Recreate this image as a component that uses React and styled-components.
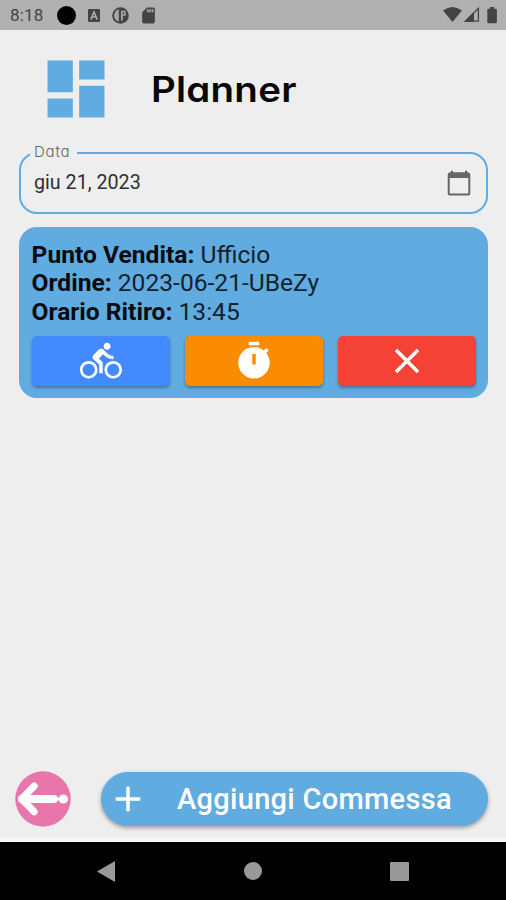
import React from 'react'
import styled, { createGlobalStyle } from 'styled-components'
import { MdDirectionsBike, MdClose, MdAdd, MdDashboard, MdSdCard } from 'react-icons/md'

const order = [
  { label: 'Punto Vendita:', value: 'Ufficio' },
  { label: 'Ordine:', value: '2023-06-21-UBeZy' },
  { label: 'Orario Ritiro:', value: '13:45' },
]

const TimerIcon = () => (
  <svg width="42" height="42" viewBox="0 0 24 24" fill="currentColor">
    <path d="M15 1H9v2h6V1zm4.03 6.39 1.42-1.42c-.43-.51-.9-.99-1.41-1.41l-1.42 1.42A8.962 8.962 0 0 0 12 4a9 9 0 1 0 7.03 3.39zM13 14h-2V8h2v6z" />
  </svg>
)

const CalendarIcon = () => (
  <svg width="24" height="26" viewBox="0 0 24 26">
    <path d="M4 0.8h2v3H4zM18 0.8h2v3h-2z" fill="#555" />
    <rect x="1.7" y="3.6" width="20.6" height="21" rx="1.6" fill="none" stroke="#666" strokeWidth="2" />
    <path d="M1 4.5Q1 2.6 3 2.6h18q2 0 2 1.9V8H1z" fill="#666" />
  </svg>
)

const BackIcon = () => (
  <svg width="56" height="56" viewBox="0 0 56 56">
    <circle cx="28" cy="28" r="27.7" fill="#e976ab" />
    <g fill="none" stroke="#fff" strokeLinecap="round" strokeLinejoin="round">
      <path d="M19.2 15L6.6 28 19.2 40.8" strokeWidth="7" />
      <path d="M7 28H39" strokeWidth="8" />
    </g>
    <path d="M42 28H53" stroke="#fff" strokeWidth="2.6" />
    <circle cx="48.3" cy="28" r="4.6" fill="#fff" />
  </svg>
)

const LetterIcon = () => (
  <svg width="12" height="13" viewBox="0 0 12 13">
    <rect width="12" height="13" rx="1" fill="#444" />
    <path d="M2.8 10.5L6 3l3.2 7.5M4.2 8h3.6" fill="none" stroke="#b0b0b0" strokeWidth="1.5" />
  </svg>
)

const CircleIcon = () => (
  <svg width="17" height="17" viewBox="0 0 17 17">
    <circle cx="8.5" cy="8.5" r="8.3" fill="#444" />
    <path d="M6.8 2.2v12.6Q2.2 13 2.2 8.5T6.8 2.2z" fill="#a8a8a8" />
    <path d="M9 3.8h4.6v5H10.8v4.6H9z" fill="#a8a8a8" />
    <path d="M10.6 5.3h1.5v2h-1.5z" fill="#444" />
  </svg>
)

const SystemIcons = () => (
  <svg width="56" height="18" viewBox="0 0 56 18">
    <path d="M0 4.5Q9.5 -2.5 19 4.5L9.5 16z" fill="#444" />
    <path d="M22.4 15.2L35.4 2.4v12.8z" fill="none" stroke="#444" strokeWidth="1.3" />
    <path d="M21 16L31 6v10z" fill="#444" />
    <path d="M44.3 4q0-1.3 1.3-1.3h1.5V1h4v1.7h1.5q1.3 0 1.3 1.3V16q0 1.2-1.3 1.2h-7q-1.3 0-1.3-1.2z" fill="#444" />
  </svg>
)

export default function App() {
  return (
    <>
      <GlobalStyle />
      <Screen>
        <StatusBar>
          <Clock>8:18</Clock>
          <Dot />
          <LetterIcon />
          <CircleIcon />
          <MdSdCard size={19} />
          <System><SystemIcons /></System>
        </StatusBar>
        <Content>
          <Header>
            <MdDashboard size={76} color="#60abdf" />
            <Title>Planner</Title>
          </Header>
          <DateField>
            <FieldLabel>Data</FieldLabel>
            <DateValue>giu 21, 2023</DateValue>
            <CalendarIcon />
          </DateField>
          <Card>
            {order.map((row) => (
              <Row key={row.label}><b>{row.label}</b> {row.value}</Row>
            ))}
            <Actions>
              <ActionButton $color="#448aff"><MdDirectionsBike size={42} /></ActionButton>
              <ActionButton $color="#fb8c00"><TimerIcon /></ActionButton>
              <ActionButton $color="#f44336"><MdClose size={42} /></ActionButton>
            </Actions>
          </Card>
          <Footer>
            <BackButton><BackIcon /></BackButton>
            <AddButton>
              <MdAdd size={42} />
              <AddText>Aggiungi Commessa</AddText>
            </AddButton>
          </Footer>
        </Content>
        <NavBar>
          <svg width="18" height="21" viewBox="0 0 18 21"><path d="M0 10.5L18 0v21z" fill="#999" /></svg>
          <HomeButton />
          <RecentButton />
        </NavBar>
      </Screen>
    </>
  )
}

const GlobalStyle = createGlobalStyle`
* {
  box-sizing: border-box;
}
body {
  margin: 0;
  font-family: Roboto, sans-serif;
}
svg {
  display: block;
  flex-shrink: 0;
}
`

const Screen = styled.div`
  display: flex;
  flex-direction: column;
  width: 506px;
  height: 900px;
  overflow: hidden;
  background-color: #eeeeee;
`
const StatusBar = styled.div`
  display: flex;
  align-items: center;
  height: 30px;
  padding: 0 7px 0 10px;
  color: #444444;
  background-color: #b0b0b0;
`
const Clock = styled.div`
  width: 47px;
  font-size: 17px;
  letter-spacing: 0.2px;
  color: #444444;
  & ~ svg:nth-of-type(1) {
    margin-left: 12px;
  }
  & ~ svg:nth-of-type(2) {
    margin-left: 12px;
  }
  & ~ svg:nth-of-type(3) {
    margin-left: 10px;
  }
`
const Dot = styled.div`
  width: 19px;
  height: 19px;
  border-radius: 50%;
  background-color: #000000;
`
const System = styled.div`
  margin-left: auto;
`
const Content = styled.div`
  display: flex;
  flex-direction: column;
  flex: 1;
  padding: 20px 18px 16px 19px;
  border-bottom: 4px solid #f5f5f5;
`
const Header = styled.div`
  display: flex;
  align-items: center;
  height: 78px;
  padding-left: 19px;
`
const Title = styled.h1`
  margin: 0 0 1px 37px;
  font-family: Inter, sans-serif;
  font-size: 35px;
  font-weight: 600;
  font-feature-settings: 'cv11';
  letter-spacing: 0.2px;
  transform: scaleX(1.1);
  transform-origin: left;
  color: #080808;
`
const DateField = styled.div`
  position: relative;
  display: flex;
  align-items: center;
  justify-content: space-between;
  height: 62px;
  margin-top: 24px;
  padding: 0 15px 0 13px;
  border: 2px solid #60abdf;
  border-radius: 18px;
`
const FieldLabel = styled.label`
  position: absolute;
  top: -11px;
  left: 9px;
  width: 47px;
  padding-left: 4px;
  font-family: Inter, sans-serif;
  font-size: 15px;
  font-weight: 300;
  line-height: 18px;
  font-feature-settings: 'cv11';
  letter-spacing: 0.8px;
  color: #666666;
  background-color: #eeeeee;
`
const DateValue = styled.div`
  font-size: 19.7px;
  color: #303030;
  padding-bottom: 2px;
`
const Card = styled.div`
  height: 171px;
  margin-top: 13px;
  padding: 13px 12px 11px 12.6px;
  border-radius: 18px;
  background-color: #60abdf;
`
const Row = styled.div`
  height: 28.3px;
  font-size: 24.6px;
  line-height: 29px;
  color: #14222d;
  white-space: nowrap;
  b {
    font-weight: 700;
    color: #060c12;
  }
`
const Actions = styled.div`
  display: grid;
  grid-template-columns: repeat(3, 1fr);
  gap: 15px;
  margin-top: 11px;
`
const ActionButton = styled.button`
  display: flex;
  align-items: center;
  justify-content: center;
  height: 50px;
  padding: 0;
  border: none;
  border-radius: 5px;
  color: #ffffff;
  background-color: ${(props) => props.$color};
  box-shadow: 0 2px 3px rgba(0, 0, 0, 0.3);
`
const Footer = styled.div`
  display: flex;
  align-items: center;
  margin-top: auto;
  margin-left: -4px;
  margin-bottom: -5px;
`
const BackButton = styled.button`
  padding: 0;
  border: none;
  background: none;
`
const AddButton = styled.button`
  display: flex;
  align-items: center;
  flex: 1;
  height: 54px;
  margin-left: 30px;
  padding: 0 0 0 6px;
  border: none;
  border-radius: 27px;
  color: #ffffff;
  background-color: #60abdf;
  box-shadow: 0 2px 4px rgba(0, 0, 0, 0.35);
`
const AddText = styled.span`
  margin-left: 28px;
  font-family: Roboto, sans-serif;
  font-size: 29px;
  font-weight: 500;
  letter-spacing: 0.3px;
  white-space: nowrap;
`
const NavBar = styled.div`
  display: flex;
  align-items: center;
  justify-content: space-between;
  height: 58px;
  padding: 0 97px;
  background-color: #000000;
`
const HomeButton = styled.div`
  width: 18px;
  height: 18px;
  border-radius: 50%;
  background-color: #999999;
`
const RecentButton = styled.div`
  width: 19px;
  height: 19px;
  border-radius: 1px;
  background-color: #999999;
`
